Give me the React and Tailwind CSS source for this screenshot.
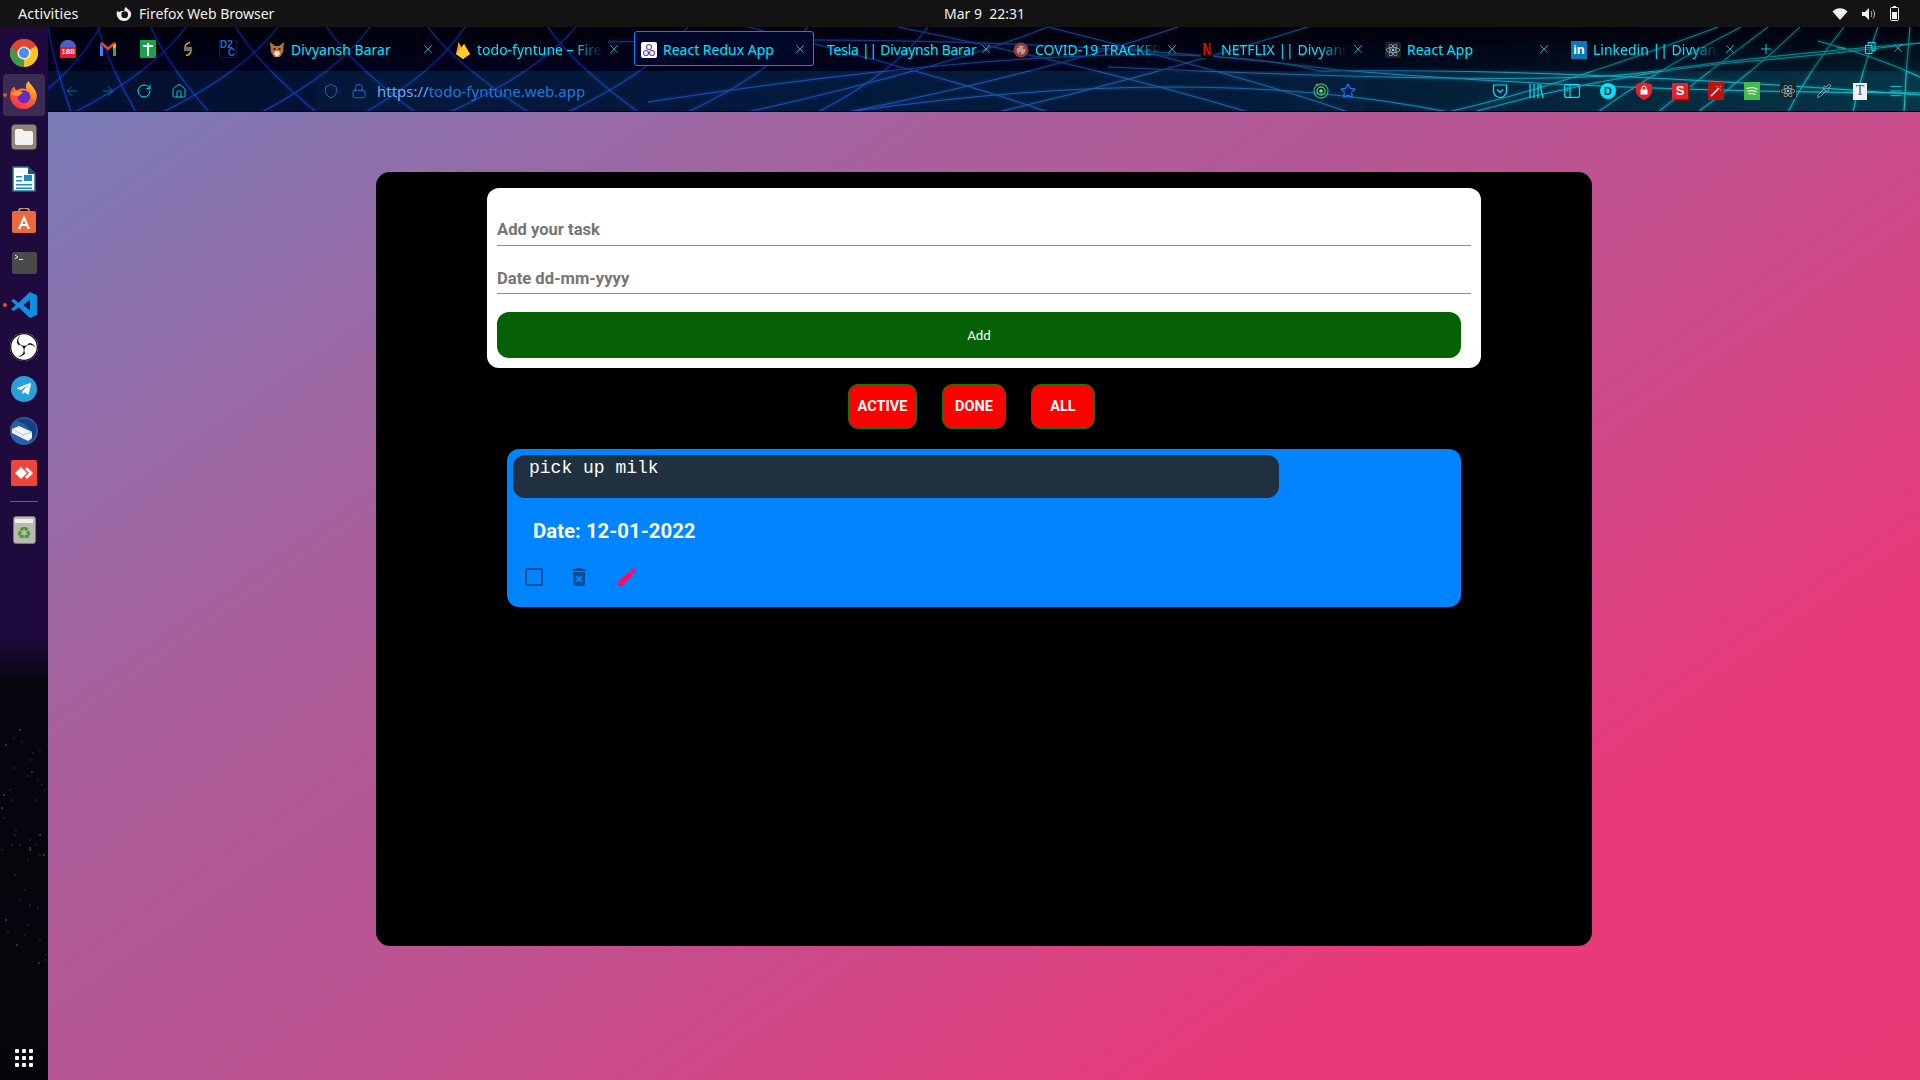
import React from "react";
import { MdCheckBoxOutlineBlank, MdDeleteForever, MdEdit } from "react-icons/md";
import { FaReact, FaTelegramPlane } from "react-icons/fa";
import { SiObsstudio } from "react-icons/si";
import { X, Plus, Minus, ArrowLeft, ArrowRight, RotateCw, Home, Shield, Lock, Star, Menu, Pipette } from "lucide-react";

const Chrome = () => (
  <svg width="28" height="28" viewBox="0 0 24 24">
    <circle cx="12" cy="12" r="12" fill="#e0452f" />
    <path d="M12 12L1.6 6A12 12 0 0 0 12 24z" fill="#3f9b45" />
    <path d="M12 12V24A12 12 0 0 0 22.4 6z" fill="#f7c325" />
    <path d="M12 6H22.4A12 12 0 0 0 1.6 6L6.8 15A6 6 0 0 1 12 6z" fill="#e0452f" />
    <circle cx="12" cy="12" r="5.6" fill="#fff" />
    <circle cx="12" cy="12" r="4.4" fill="#4c8df0" />
  </svg>
);
const Firefox = ({ s = 28 }) => (
  <svg width={s} height={s} viewBox="0 0 24 24">
    <defs>
      <linearGradient id="ffg" x1="0.8" y1="0" x2="0.2" y2="1">
        <stop offset="0" stopColor="#ffcc33" />
        <stop offset="0.5" stopColor="#ff6a2a" />
        <stop offset="1" stopColor="#f0245f" />
      </linearGradient>
    </defs>
    <path d="M16 0c1 3 6 6 7 12a11.5 11.5 0 1 1-22-4c1-2 2-2.600 3-3 0 2 1 2.500 2 3 2-2 6-2 8-1-1-3 0-5 2-7z" fill="url(#ffg)" />
    <circle cx="12" cy="13.500" r="5.500" fill="#6a2bc0" />
    <path d="M1 11c3-3 7-3 10-1l-4 3c-2 0-4-1-6-2z" fill="#ff9a2a" />
  </svg>
);
const Files = () => (
  <svg width="26" height="26" viewBox="0 0 26 26">
    <rect x="0.500" y="0.500" width="25" height="25" rx="3.500" fill="#8f8775" />
    <path d="M4 7a2 2 0 0 1 2-2h5l2 2h7a2 2 0 0 1 2 2v10a2 2 0 0 1-2 2H6a2 2 0 0 1-2-2z" fill="#f4f2ee" />
  </svg>
);
const Writer = () => (
  <svg width="24" height="26" viewBox="0 0 24 26">
    <path d="M1 1h15l7 7v17H1z" fill="#fff" stroke="#1e6a96" strokeWidth="1.500" />
    <path d="M16 0l8 8h-8z" fill="#17587c" />
    <rect x="12" y="9" width="8" height="6" fill="#1e88c8" />
    <path d="M4 10h6v1.500H4zM4 14h6v1.500H4zM4 18h16v1.500H4zM4 21.500h16V23H4z" fill="#1e88c8" />
  </svg>
);
const Software = () => (
  <svg width="26" height="26" viewBox="0 0 26 26">
    <path d="M8 4V2.500a5 2.500 0 0 1 10 0V4" fill="none" stroke="#d9a184" strokeWidth="1.500" />
    <rect x="1" y="3" width="24" height="22" rx="2" fill="#ea6a3a" />
    <path d="M13 7l6 14h-2.600l-1.100-3h-4.600l-1.100 3H7zm0 5l-1.500 4h3z" fill="#fff" fillRule="evenodd" />
  </svg>
);
const Term = () => (
  <svg width="25" height="22" viewBox="0 0 25 22">
    <rect width="25" height="22" rx="2.500" fill="#4a4a4a" />
    <path d="M3 3l3 2-3 2M7 7.500h4" fill="none" stroke="#eee" strokeWidth="1" />
  </svg>
);
const VSCode = () => (
  <svg width="26" height="26" viewBox="0 0 24 24">
    <path d="M17.500 0L24 3v18l-6.500 3L7 14l-4.500 3.500L0 16l4.500-4L0 8l2.500-1.500L7 10z" fill="#0f8fe0" />
    <path d="M17.500 7l-6 5 6 5z" fill="#1d0b3c" />
  </svg>
);
const Obs = () => (
  <div className="w-[28px] h-[28px] rounded-full bg-white flex items-center justify-center">
    <SiObsstudio className="text-[#111]" size={28} />
  </div>
);
const Thunderbird = () => (
  <svg width="28" height="28" viewBox="0 0 28 28">
    <circle cx="14" cy="14" r="14" fill="#2a5fa8" />
    <path d="M6 4c6-4 14-3 19 3 3 6 1 13-3 16C24 14 16 6 6 4z" fill="#1a3f80" />
    <path d="M2 12l7-3 13 6v6l-4 3-16-8z" fill="#f2f2f2" />
    <path d="M2 12l11 6 9-3" fill="none" stroke="#bfc6d2" strokeWidth="1" />
  </svg>
);
const AnyDesk = () => (
  <svg width="26" height="26" viewBox="0 0 26 26">
    <rect width="26" height="26" rx="1.500" fill="#ef443b" />
    <path d="M10 7l6 6-6 6-6-6z" fill="#fff" />
    <path d="M16 7l6 6-6 6-2-2 4-4-4-4z" fill="#fff" />
  </svg>
);
const TrashCan = () => (
  <div className="w-[23px] h-[28px] rounded-[3px] bg-[#b9b9b0] border border-[#777] flex flex-col items-center">
    <div className="w-[18px] h-[4px] mt-[2px] bg-[#eee]" />
    <div className="text-[#3e9a3a] text-[17px] leading-[20px] font-['DejaVu_Sans',sans-serif]">♻</div>
  </div>
);

const SideIcon = ({ children, active, dot }) => (
  <div className="relative h-[42px] w-[48px] flex items-center justify-center">
    {active && <div className="absolute left-[3px] right-[3px] top-0 bottom-0 rounded-[4px] bg-[#3a2c55]" />}
    {dot && <div className="absolute left-[3px] top-[19px] w-[4px] h-[4px] rounded-full bg-[#e95420]" />}
    <div className="relative flex">{children}</div>
  </div>
);

const specks = [
  [20,730],[14,738],[22,742],[33,753],[6,745],[40,750],[30,760],[14,768],[32,772],[28,776],[38,780],[10,790],
  [4,795],[42,785],[12,800],[36,800],[2,808],[45,790],[4,818],[15,835],[40,835],[16,830],[30,840],[12,845],[30,850],[35,845],
  [20,845],[40,855],[30,848],[2,850],[28,860],[15,875],[44,855],[25,890],[20,900],[30,905],[6,920],[28,925],[38,908],[40,940],[17,945],[25,935],[8,932],[45,960],[39,963],[46,955]
];

const Tab = ({ icon, title, fade, active, plain }) => (
  <div className="relative h-[35px] w-[186px] shrink-0 flex items-center pt-[2px] pl-[8px]">
    {active && <div className="absolute left-px top-0 w-[180px] h-[35px] rounded-[3px] border border-[#0a84ff] bg-[#00082a]" />}
    {icon && <div className="relative w-[16px] h-[16px] flex items-center justify-center shrink-0 mr-[6px]">{icon}</div>}
    <div className={`relative text-[14px] leading-[20px] whitespace-nowrap overflow-hidden text-[#00e5ff] ${plain ? "w-[156px] tracking-[-0.25px]" : "w-[126px]"} ${fade ? "[mask-image:linear-gradient(to_right,black_78%,transparent_100%)]" : ""}`}>{title}</div>
    <X className="absolute right-[12px] top-[11px] text-[#00e5ff]" size={14} strokeWidth={1.300} />
  </div>
);

const Pinned = ({ children }) => <div className="w-[40px] h-[35px] flex items-center justify-center shrink-0">{children}</div>;

const Tool = ({ children }) => <div className="w-[36px] flex items-center justify-center shrink-0">{children}</div>;

const downRight = [[0, 23], [50, 88], [103, 161], [188, 268], [279, 367], [380, 480], [500, 590]];
const downLeft = [[52, -30], [138, 27], [230, 115], [322, 214], [417, 318], [528, 402], [640, 520], [760, 640], [880, 770]];
const shallow = [
  [1000, 900, 40, 700, 85],
  [1130, 1000, 45, 800, 85],
  [1260, 1100, 50, 950, 85],
  [700, 900, 50, 1000, 85],
  [850, 1050, 40, 1200, 85],
  [1000, 1200, 50, 1300, 85],
];
const fanRight = [
  [1670, 1510, 60, 1400, 85],
  [1693, 1605, 45, 1550, 85],
  [1720, 1660, 45, 1610, 85],
  [1752, 1705, 45, 1650, 85],
  [1796, 1760, 45, 1740, 85],
  [1830, 1815, 40, 1805, 85],
  [1862, 1858, 40, 1856, 85],
];

const GridLines = () => (
  <>
    {downRight.map(([a, b]) => (
      <path key={`a${a}`} d={`M${a} 0Q${a + (b - a) * 0.25} 35 ${b} 85`} />
    ))}
    {downLeft.map(([a, b]) => (
      <path key={`b${a}`} d={`M${a} 0Q${a + (b - a) * 0.3} 45 ${b} 85`} />
    ))}
    {[...shallow, ...fanRight].map(([a, cx, cy, b, y]) => (
      <path key={`f${a}${b}`} d={`M${a} 0Q${cx} ${cy} ${b} ${y}`} />
    ))}
    <path d="M560 15Q1000 5 1290 43Q1560 65 1872 66" />
    <path d="M600 75Q1100 0 1272 44Q1500 40 1872 68" />
    <path d="M800 85Q1150 35 1400 85" />
    <path d="M1060 40Q1500 60 1600 45Q1700 30 1872 16" />
    <path d="M1425 85Q1550 50 1670 37Q1780 28 1872 16" />
    <path d="M1770 14Q1830 30 1872 50" />
  </>
);

const Toolbar = () => (
  <div className="relative h-[85px] shrink-0 overflow-hidden bg-[linear-gradient(to_right,#00031f_0%,#000628_40%,#000a24_65%,#011a2c_76%,#04343f_100%)] border-b border-b-[#000] font-['Noto_Sans',sans-serif]">
    <div className="absolute inset-0 bg-[linear-gradient(to_bottom,#000000_0%,#00000000_60%)]" />
    <svg className="absolute inset-0" width="1872" height="85" viewBox="0 0 1872 85">
      <defs>
        <linearGradient id="gridg" gradientUnits="userSpaceOnUse" x1="0" y1="0" x2="1872" y2="0">
          <stop offset="0" stopColor="#1a3ce8" />
          <stop offset="0.45" stopColor="#2a60e8" />
          <stop offset="0.66" stopColor="#2a7fc0" />
          <stop offset="0.8" stopColor="#1cc0d8" />
          <stop offset="1" stopColor="#1ef0e8" />
        </linearGradient>
        <filter id="glow" x="-10%" y="-50%" width="120%" height="200%">
          <feGaussianBlur stdDeviation="1.500" />
        </filter>
      </defs>
      <g fill="none" stroke="url(#gridg)" strokeWidth="2.500" opacity="0.35" filter="url(#glow)">
        <GridLines />
      </g>
      <g fill="none" stroke="url(#gridg)" strokeWidth="1">
        <GridLines />
      </g>
    </svg>
    <div className="relative h-[44px] flex items-start pt-[4px] bg-[#00001a]/40">
      <Pinned>
        <div className="w-[16px] h-[18px] rounded-t-full bg-[#e21b2c] overflow-hidden flex flex-col items-center">
          <div className="w-full h-[7px] bg-[#4a5fd0] shrink-0" />
          <div className="text-[8px] leading-[10px] font-bold text-white font-['Liberation_Sans',sans-serif]">188</div>
        </div>
      </Pinned>
      <Pinned>
        <svg width="16" height="14" viewBox="0 0 16 14">
          <path d="M0 1.500V14h3V5z" fill="#4285f4" />
          <path d="M16 1.500V14h-3V5z" fill="#34a853" />
          <path d="M0 1.500L2 0l6 5 6-5 2 1.500L8 8.500z" fill="#ea4335" />
          <path d="M13 3.500L16 1.500V5l-3 2z" fill="#fbbc04" />
        </svg>
      </Pinned>
      <Pinned>
        <div className="relative w-[16px] h-[18px] bg-[#16a34a] rounded-[1px]">
          <div className="absolute left-[3px] right-[3px] top-[5px] h-[2px] bg-white" />
          <div className="absolute top-[3px] bottom-[2px] left-[7px] w-[2px] bg-white" />
        </div>
      </Pinned>
      <Pinned>
        <svg width="16" height="16" viewBox="0 0 16 16" fill="none">
          <circle cx="8" cy="8" r="8" fill="#05050f" />
          <path d="M5 6C5.500 3.500 7.500 2 10 1.500" stroke="#f0a020" strokeWidth="1.500" />
          <path d="M11 10C10.500 12.500 8.500 14 6 14.500" stroke="#f0a020" strokeWidth="1.500" />
          <path d="M4 7h8M4 9h8" stroke="#ddd" strokeWidth="1" />
        </svg>
      </Pinned>
      <Pinned>
        <div className="w-[18px] h-[18px] border border-[#0a1a44] text-[#2a63c8] text-[10px] leading-[8px] font-bold font-['Liberation_Sans',sans-serif] whitespace-nowrap">D2<br /><span className="pl-[8px]">C</span></div>
      </Pinned>
      <div className="w-[16px] shrink-0" />
      <div className="flex h-[35px] ml-[-3px]">
        <Tab title="Divyansh Barar" icon={
          <svg width="16" height="16" viewBox="0 0 16 16"><path d="M1 0l5 4h4l5-4-1 10-3 5H5l-3-5z" fill="#b5713a" /><path d="M6 9h4l1 3-3 3-3-3z" fill="#f2e2cc" /><circle cx="5.500" cy="7" r="1" fill="#111" /><circle cx="10.500" cy="7" r="1" fill="#111" /></svg>
        } />
        <Tab title="todo-fyntune – Firebase" fade icon={
          <svg width="14" height="18" viewBox="0 0 14 18"><path d="M0 13L2.500 1l3.500 6 2-4 6 10-7 5z" fill="#ffa000" /><path d="M0 13L8 3l6 10-7 5z" fill="#ffca28" /></svg>
        } />
        <Tab title="React Redux App" active icon={
          <div className="w-[16px] h-[16px] bg-white rounded-[2px] flex items-center justify-center">
            <svg width="14" height="14" viewBox="0 0 14 14" fill="none" stroke="#7648b8" strokeWidth="1.200"><circle cx="7" cy="4" r="2.500" /><circle cx="4" cy="10" r="2.500" /><circle cx="10" cy="10" r="2.500" /></svg>
          </div>
        } />
        <Tab title="Tesla || Divaynsh Barar" plain />
        <Tab title="COVID-19 TRACKER" fade icon={
          <svg width="16" height="16" viewBox="0 0 16 16"><circle cx="8" cy="8" r="7.500" fill="#8c3b3b" /><circle cx="8" cy="8" r="4.500" fill="#b99" /><circle cx="5" cy="5" r="1.200" fill="#c33" /><circle cx="11" cy="6" r="1.200" fill="#c33" /><circle cx="7" cy="11" r="1.200" fill="#c33" /></svg>
        } />
        <Tab title="NETFLIX || Divyansh" fade icon={
          <div className="w-[16px] h-[16px] bg-black flex items-center justify-center text-[#e50914] text-[16px] leading-[16px] font-bold scale-x-75 font-['Liberation_Sans',sans-serif]">N</div>
        } />
        <Tab title="React App" icon={
          <div className="w-[16px] h-[16px] bg-[#222] rounded-[2px] flex items-center justify-center"><FaReact className="text-[#8fc7dc]" size={14} /></div>
        } />
        <Tab title="Linkedin || Divyansh" fade icon={
          <div className="w-[16px] h-[18px] bg-[#0a78b8] flex items-center justify-center text-white text-[13px] leading-[16px] font-bold font-['Liberation_Sans',sans-serif]">in</div>
        } />
      </div>
      <Plus className="ml-[9px] mt-[10px] text-[#00e5ff] shrink-0" size={16} strokeWidth={1.300} />
      <Minus className="ml-[61px] mt-[11px] text-[#00e5ff] shrink-0" size={12} strokeWidth={1.200} />
      <svg className="ml-[17px] mt-[11px] shrink-0" width="12" height="12" viewBox="0 0 12 12" fill="none" stroke="#00e5ff"><rect x="1.500" y="3.500" width="6.500" height="8" /><path d="M4 3V.5h7v8H8" /></svg>
      <X className="ml-[15px] mt-[10px] text-[#00e5ff] shrink-0" size={14} strokeWidth={1.200} />
    </div>
    <div className="relative h-[40px] flex items-center bg-[#0a3c64]/25">
      <ArrowLeft className="ml-[16px] shrink-0 text-[#0d7a96]" size={16} strokeWidth={1.300} />
      <ArrowRight className="ml-[20px] shrink-0 text-[#0d7a96]" size={16} strokeWidth={1.300} />
      <RotateCw className="ml-[20px] shrink-0 text-[#00e5ff]" size={16} strokeWidth={1.500} />
      <Home className="ml-[19px] shrink-0 text-[#00e5ff]" size={16} strokeWidth={1.300} />
      <div className="ml-[129px] h-[40px] w-[1049px] shrink-0 flex items-center pl-[7px] bg-[#0a3c64]/15">
        <Shield className="shrink-0 text-[#1e78d8]" size={16} strokeWidth={1.300} />
        <Lock className="ml-[12px] shrink-0 text-[#1e78d8]" size={16} strokeWidth={1.300} />
        <div className="ml-[10px] w-[880px] shrink-0 text-[15px] leading-[20px] whitespace-nowrap">
          <span className="text-[#6ea8f0]">https://</span><span className="text-[#1e78d8]">todo-fyntune.web.app</span>
        </div>
        <svg className="ml-[56px] shrink-0" width="16" height="18" viewBox="0 0 16 18" fill="none"><circle cx="8" cy="9" r="7" stroke="#2aa870" strokeWidth="1.300" /><circle cx="8" cy="9" r="4" stroke="#5cc05a" strokeWidth="1.300" /><circle cx="8" cy="9" r="1.800" fill="#7fdc7a" /><circle cx="4" cy="3" r="1.500" fill="#e0503a" /></svg>
        <Star className="ml-[11px] shrink-0 text-[#1a78ff]" size={16} strokeWidth={1.700} />
      </div>
      <div className="flex ml-[117px]">
        <Tool><svg width="16" height="16" viewBox="0 0 16 16" fill="none" stroke="#00e5ff" strokeWidth="1.200"><path d="M1.500 2h13v6a6.500 6.500 0 0 1-13 0z" /><path d="M5 6.500l3 3 3-3" /></svg></Tool>
        <Tool><svg width="16" height="16" viewBox="0 0 16 16" stroke="#00e5ff" strokeWidth="1.200"><path d="M2 1v14M6 1v14M10 1v14M12 1l3 14" /></svg></Tool>
        <Tool><svg width="16" height="14" viewBox="0 0 16 14" fill="none" stroke="#00e5ff" strokeWidth="1.100"><rect x="0.600" y="0.600" width="14.800" height="12.800" rx="2" /><path d="M6 1v12M2.500 4h2M2.500 6.500h2" /></svg></Tool>
        <Tool><div className="w-[16px] h-[16px] rounded-full bg-[#00e5ff] flex items-center justify-center text-[#062c3c] text-[11px] leading-[16px] font-bold font-['Liberation_Sans',sans-serif]">D</div></Tool>
        <Tool><svg width="16" height="18" viewBox="0 0 16 18"><path d="M8 0l8 2.500V9c0 4-4 7.500-8 9-4-1.500-8-5-8-9V2.500z" fill="#e3222c" /><rect x="4.500" y="7.500" width="7" height="5" fill="#fff" /><path d="M6 7.500V6a2 2 0 0 1 4 0v1.500" fill="none" stroke="#fff" /></svg></Tool>
        <Tool><div className="w-[16px] h-[16px] bg-[#e3222c] rounded-[1px] flex items-center justify-center text-white text-[13px] leading-[16px] font-bold shadow-[2px_2px_0_#7a1010] font-['Liberation_Sans',sans-serif]">S</div></Tool>
        <Tool><div className="w-[16px] h-[18px] bg-[#c01010] flex items-center justify-center"><svg width="12" height="12" viewBox="0 0 12 12"><path d="M1 11L9 3" stroke="#fff" strokeWidth="1.500" /><path d="M10 1l1 1M11 5l-1 0M7 1v1" stroke="#fbb" /></svg></div></Tool>
        <Tool><div className="w-[16px] h-[18px] bg-[#46b84e] flex items-center justify-center"><svg width="12" height="10" viewBox="0 0 12 10" fill="none" stroke="#e4f4e4" strokeWidth="1.300" strokeLinecap="round"><path d="M1 2.500C4 1.500 8 1.500 11 3M2 5.200C4.500 4.400 7.500 4.500 10 5.700M3 7.800C5 7.200 7 7.300 9 8.300" /></svg></div></Tool>
        <Tool><div className="w-[16px] h-[16px] bg-[#222] rounded-[2px] flex items-center justify-center"><FaReact className="text-[#8fc7dc]" size={14} /></div></Tool>
        <Tool><Pipette className="text-[#8a9ab8]" size={16} strokeWidth={1.500} /></Tool>
        <Tool><div className="w-[14px] h-[17px] bg-[#f0f0f0] flex items-center justify-center text-[#555] text-[14px] leading-[16px] font-['Liberation_Serif',serif]">T</div></Tool>
        <Tool><Menu className="text-[#00e5ff]" size={16} strokeWidth={1.300} /></Tool>
      </div>
    </div>
  </div>
);

export default function App() {
  return (
    <div className="w-[1920px] h-[1080px] overflow-hidden flex flex-col bg-black">
      <div className="h-[27px] shrink-0 bg-[#131313] flex items-center relative text-[#f0f0f0] text-[14px] leading-[20px] font-['Noto_Sans',sans-serif]">
        <div className="ml-[18px] -mt-px w-[98px] text-[14.500px]">Activities</div>
        <svg className="mr-[7px]" width="16" height="16" viewBox="0 0 24 24"><path d="M15 1c1 3 7 5 8 11a11 11 0 1 1-21-5c1 1 2 2 3 2 2-2 6-2 8-1-1-3 0-5 2-7z" fill="#eee" /><circle cx="13" cy="13" r="5" fill="#131313" /></svg>
        <div>Firefox Web Browser</div>
        <div className="absolute left-[944px] top-[4px] whitespace-pre">Mar 9  22:31</div>
        <div className="ml-auto flex items-center gap-[14px] pr-[21px]">
          <svg width="16" height="12" viewBox="0 0 15 12"><path d="M0 3.500C4-1 11-1 15 3.500L7.500 12z" fill="#f0f0f0" /></svg>
          <svg width="14" height="14" viewBox="0 0 14 14"><path d="M0 5h3l4-4v12l-4-4H0z" fill="#f0f0f0" /><path d="M9 4c1 2 1 4 0 6M11 2.500c2 3 2 6 0 9" fill="none" stroke="#bbb" /></svg>
          <svg width="9" height="15" viewBox="0 0 9 15"><rect x="0.500" y="1.500" width="8" height="13" rx="1" fill="none" stroke="#f0f0f0" /><rect x="3" y="0" width="3" height="1.500" fill="#f0f0f0" /><rect x="2" y="6" width="5" height="7" fill="#f0f0f0" /></svg>
        </div>
      </div>
      <div className="flex-1 flex min-h-0">
        <aside className="relative w-[48px] shrink-0 flex flex-col items-center pt-[5px] bg-[linear-gradient(to_bottom,#1e0a3d_0%,#1e0a3d_58%,#06060f_62%,#04040a_100%)]">
          <svg className="absolute inset-0" width="48" height="1053" viewBox="0 27 48 1053">
            {specks.map(([x, y], i) => (
              <circle key={i} cx={x} cy={y} r={i % 4 === 0 ? 1 : 0.700} fill="#8a8a90" opacity="0.45" />
            ))}
          </svg>
          <SideIcon><Chrome /></SideIcon>
          <SideIcon active dot><Firefox /></SideIcon>
          <SideIcon><Files /></SideIcon>
          <SideIcon><Writer /></SideIcon>
          <SideIcon><Software /></SideIcon>
          <SideIcon><Term /></SideIcon>
          <SideIcon dot><VSCode /></SideIcon>
          <SideIcon><Obs /></SideIcon>
          <SideIcon><div className="w-[26px] h-[26px] rounded-full bg-[#2a9fd8] flex items-center justify-center"><FaTelegramPlane className="text-white" size={16} /></div></SideIcon>
          <SideIcon><Thunderbird /></SideIcon>
          <SideIcon><AnyDesk /></SideIcon>
          <div className="w-[28px] h-px bg-[#6a5f7a] mt-[7px] mb-[7px]" />
          <SideIcon><TrashCan /></SideIcon>
          <div className="relative mt-auto mb-[13px] grid grid-cols-3 gap-[3px]">
            {[0, 1, 2, 3, 4, 5, 6, 7, 8].map((i) => (
              <div key={i} className="w-[4px] h-[4px] rounded-[1px] bg-white" />
            ))}
          </div>
        </aside>
        <main className="flex-1 min-w-0 flex flex-col">
          <Toolbar />
          <div className="flex-1 pt-[60px] bg-[linear-gradient(145deg,#7a7db8_0%,#a8609c_28%,#bd5290_50%,#e83a7a_78%,#e93a78_100%)]">
            <div className="w-[1216px] h-[774px] mx-auto rounded-[14px] bg-black pt-[16px]">
              <div className="w-[994px] h-[180px] mx-auto rounded-[12px] bg-white pl-[10px] pr-[10px] font-['Roboto',sans-serif]">
                <div className="h-[58px] border-b border-b-[#8e8e8e] flex items-end pb-[3px] text-[16.600px] leading-[24px] font-bold text-[#757575]">Add your task</div>
                <div className="h-[48px] border-b border-b-[#8e8e8e] flex items-end pb-[2px] text-[16.600px] leading-[24px] font-bold text-[#757575]">Date dd-mm-yyyy</div>
                <div className="mt-[18px] h-[46px] w-[964px] rounded-[12px] bg-[#056103] flex items-center justify-center pt-[1px] text-[13.300px] leading-[16px] text-white">Add</div>
              </div>
              <div className="mt-[16px] flex justify-center gap-[25px] pr-[25px] font-['Roboto',sans-serif] text-[14.500px] leading-[20px] font-bold text-white">
                <div className="h-[45px] w-[69px] rounded-[10px] border border-[#0a7a0a] bg-[#ff0000] flex items-center justify-center">ACTIVE</div>
                <div className="h-[45px] w-[64px] rounded-[10px] border border-[#0a7a0a] bg-[#ff0000] flex items-center justify-center">DONE</div>
                <div className="h-[45px] w-[64px] rounded-[10px] border border-[#0a7a0a] bg-[#ff0000] flex items-center justify-center">ALL</div>
              </div>
              <div className="ml-[131px] mt-[20px] w-[954px] h-[158px] rounded-[12px] bg-[#0084ff] pt-[6px] pl-[6px]">
                <div className="w-[766px] h-[43px] rounded-[12px] bg-[#203040] pl-[16px] pt-[3px] text-[18px] leading-[20px] text-white font-['Liberation_Mono',monospace]">pick up milk</div>
                <div className="mt-[21px] pl-[20px] text-[20.400px] leading-[24px] font-bold text-white font-['Roboto',sans-serif]">Date: 12-01-2022</div>
                <div className="mt-[22px] pl-[9px] flex">
                  <MdCheckBoxOutlineBlank className="text-[#0a4f96]" size={24} />
                  <MdDeleteForever className="ml-[21px] text-[#0a4f96]" size={24} />
                  <MdEdit className="ml-[24px] text-[#ff0a5c]" size={24} />
                </div>
              </div>
            </div>
          </div>
        </main>
      </div>
    </div>
  );
}
